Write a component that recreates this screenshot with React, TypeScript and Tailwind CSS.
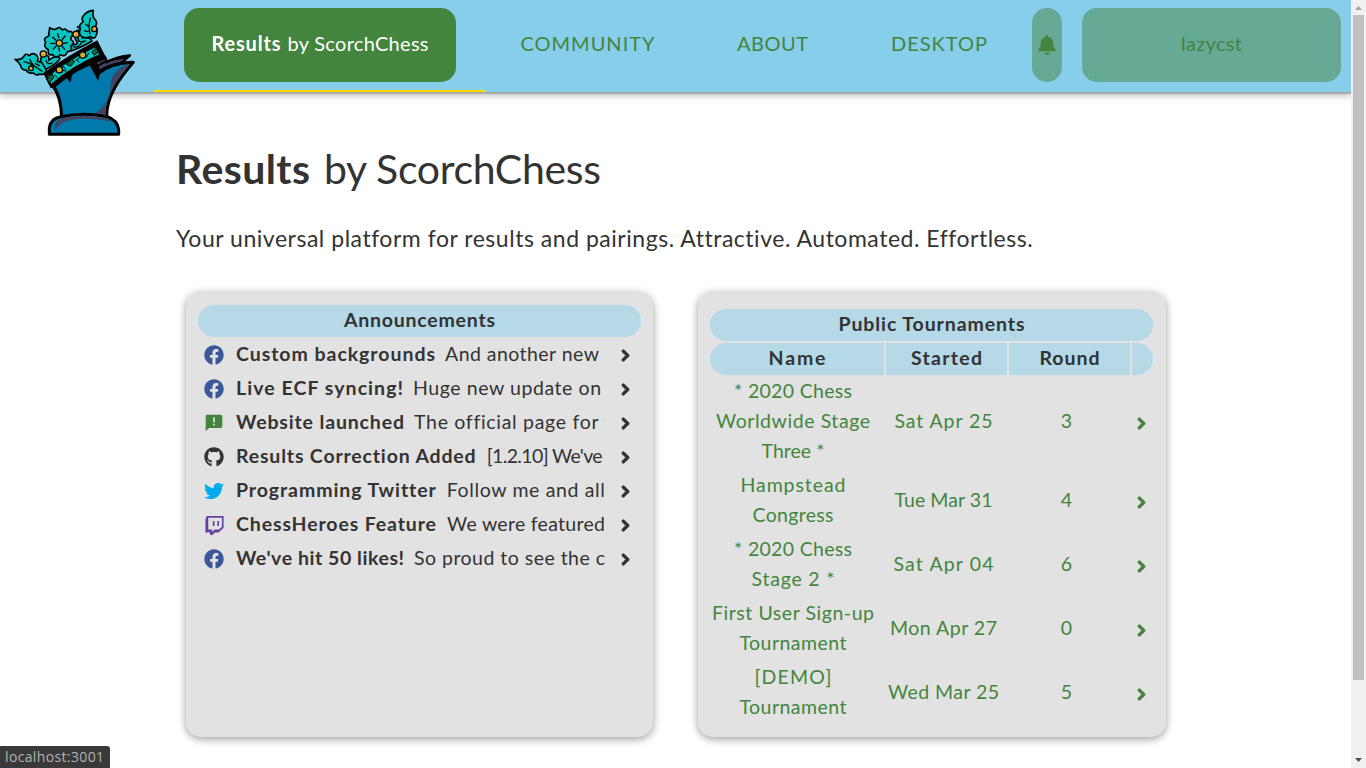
import React, { useLayoutEffect, useRef } from "react";
import { FaBell, FaChevronRight, FaFacebook, FaGithub, FaTwitter } from "react-icons/fa";
import { MdAnnouncement } from "react-icons/md";

/* One line of text tracked so that it spans `w` pixels. */
function Fit({ w, children, className = "" }: { w: number; children: string; className?: string }) {
  const ref = useRef<HTMLSpanElement>(null);
  useLayoutEffect(() => {
    const el = ref.current;
    if (!el) return;
    el.style.letterSpacing = "0px";
    el.style.marginRight = "0px";
    const natural = el.getBoundingClientRect().width;
    const gap = (w - natural) / Math.max(1, children.length - 1);
    el.style.letterSpacing = `${gap}px`;
    el.style.marginRight = `${-gap}px`;
  }, [w, children]);
  return (
    <span ref={ref} className={`inline-block shrink-0 whitespace-pre ${className}`}>
      {children}
    </span>
  );
}

function TwitchIcon() {
  return (
    <svg viewBox="0 0 24 24" className="size-[19px]" fill="#6441a5">
      <path d="M2.149 0L.537 4.119v16.836h5.731V24h3.224l3.045-3.045h4.657l6.269-6.269V0H2.149zm19.164 13.612l-3.582 3.582H12l-3.045 3.045v-3.045H4.119V2.149h17.194v11.463zm-3.582-7.343v6.262h-2.149V6.269h2.149zm-5.731 0v6.262H9.851V6.269H12z" />
    </svg>
  );
}

function Logo() {
  return (
    <svg viewBox="0 0 390 405" className="h-[135px] w-[130px]" strokeLinejoin="round" strokeLinecap="round">
      {/* rear mane */}
      <path d="M236 190L250 120L286 158L290 172Q320 154 360 151L330 178L270 215Z" fill="#444360" stroke="#000" strokeWidth="7" />
      {/* body */}
      <path
        d="M128 242C148 266 154 300 155 338L290 338C288 272 332 216 370 172C322 172 282 186 262 206C262 184 256 170 248 150L170 190Z"
        fill="#0079ac"
        stroke="#000"
        strokeWidth="9"
      />
      <path d="M361 177C325 184 298 216 302 248C296 290 276 315 248 328L287 334C284 272 326 218 361 177Z" fill="#444360" />
      <path d="M264 228C254 206 246 192 236 176C256 170 270 180 271 204Z" fill="#000" />
      <path d="M266 206C290 185 330 175 366 173" fill="none" stroke="#000" strokeWidth="7" />
      <path d="M250 196C272 168 310 162 345 158" fill="none" stroke="#000" strokeWidth="6" />
      <path d="M166 208L188 196Q184 212 181 230Q170 222 166 208Z" fill="#000" stroke="#000" strokeWidth="3" />
      {/* base */}
      <path d="M118 388V368Q122 340 152 335Q220 320 292 335Q322 345 326 374V388Z" fill="#0079ac" stroke="#000" strokeWidth="9" />
      <path d="M134 374Q132 344 160 339Q220 327 284 339Q300 343 309 351Q220 333 170 348Q146 354 138 374Z" fill="#444360" />
      {/* crown band */}
      <path d="M100 204Q176 150 262 106L290 162Q200 190 136 246L122 250Q112 232 100 204Z" fill="#000" />
      <path d="M113 216Q180 162 254 128L268 148Q190 180 124 236Z" fill="#00c5c0" />
      <path d="M112 222L126 206L132 217L118 233ZM170 177L184 163L194 169L183 183ZM246 140L259 129L266 141L253 150Z" fill="#0b6846" stroke="#000" strokeWidth="3" />
      <path d="M134 210L142 218M157 196L168 198M202 166L208 156M230 156L236 144M158 184L168 193M197 163L207 171" fill="none" stroke="#000" strokeWidth="3" />
      {/* scrolls between the leaves */}
      <path d="M96 178Q84 158 104 150Q120 150 116 166Q142 146 150 160Q146 174 102 196ZM184 138Q172 120 188 116Q200 122 202 112Q188 96 202 76Q220 80 216 98Q240 94 246 108Q224 122 184 138Z" fill="#00c5c0" stroke="#000" strokeWidth="5" />
      <path d="M108 166Q112 180 126 174M204 98Q204 116 226 108M190 124Q202 132 214 114" fill="none" stroke="#000" strokeWidth="4" />
      <path d="M204 66Q220 72 216 92" fill="none" stroke="#0b3654" strokeWidth="8" />
      {/* left leaf */}
      <path
        d="M15 163Q34 166 40 156Q47 142 58 152Q66 142 78 149Q87 158 82 169Q94 168 100 180Q108 190 108 200Q102 212 88 207Q80 214 70 204Q54 206 50 196Q34 196 32 182Q28 172 15 163Z"
        fill="#00c5c0"
        stroke="#000"
        strokeWidth="5"
      />
      <path d="M42 170Q66 176 96 199M60 164Q62 172 70 180M76 176L88 182" fill="none" stroke="#000" strokeWidth="4" />
      {/* right leaf */}
      <path
        d="M250 16Q232 18 222 30Q212 40 220 50Q204 60 211 72Q203 86 216 95Q230 102 240 94Q254 106 259 90Q265 76 256 64Q264 52 254 42Q246 34 250 16Z"
        fill="#00c5c0"
        stroke="#000"
        strokeWidth="5"
      />
      <path d="M241 40Q234 62 240 86M224 78L234 80M228 58L234 64" fill="none" stroke="#000" strokeWidth="4" />
      {/* flower */}
      <path
        d="M119 68Q132 76 138 72Q150 62 156 75Q168 68 174 80Q190 76 187 92Q180 100 183 104Q198 112 183 123Q188 140 172 140Q166 158 151 149Q138 164 128 149Q111 152 115 134Q98 125 107 112Q98 100 112 95Q120 91 116 86Q118 78 119 68Z"
        fill="#00c5c0"
        stroke="#000"
        strokeWidth="5"
      />
      <path d="M146 98L143 86M157 103L165 93M161 115L172 113M157 124L164 133M147 129L148 138M138 124L130 132M134 115L122 116M137 105L128 97" fill="none" stroke="#000" strokeWidth="4" />
      {/* jewels */}
      <g fill="#d9ab32" stroke="#000" strokeWidth="4">
        <circle cx="148" cy="114" r="9.500" />
        <circle cx="100" cy="147" r="9.500" />
        <circle cx="198" cy="88" r="9.500" />
        <circle cx="148" cy="194" r="9.500" />
        <circle cx="218" cy="150" r="9.500" />
        <circle cx="253" cy="72" r="8" />
        <circle cx="63" cy="190" r="7" />
      </g>
    </svg>
  );
}

const fb = <FaFacebook size={20} color="#3b5998" />;
type Item = { icon: React.ReactNode; title: string; tw: number; gap: string; body: string; bw: number };
const items: Item[] = [
  { icon: fb, title: "Custom backgrounds", tw: 199, gap: "pl-[10px]", body: "And another new", bw: 154 },
  { icon: fb, title: "Live ECF syncing!", tw: 167, gap: "pl-[10px]", body: "Huge new update on", bw: 188 },
  { icon: <MdAnnouncement size={20} color="#43853d" />, title: "Website launched", tw: 168, gap: "pl-[10px]", body: "The official page for the", bw: 219 },
  { icon: <FaGithub size={20} />, title: "Results Correction Added", tw: 240, gap: "pl-[11px]", body: "[1.2.10] We've", bw: 116 },
  { icon: <FaTwitter size={20} color="#00acee" />, title: "Programming Twitter", tw: 199, gap: "pl-[11px]", body: "Follow me and all", bw: 158 },
  { icon: <TwitchIcon />, title: "ChessHeroes Feature", tw: 200, gap: "pl-[11px]", body: "We were featured", bw: 158 },
  { icon: fb, title: "We've hit 50 likes!", tw: 168, gap: "pl-[10px]", body: "So proud to see the c", bw: 191 },
];

type Row = { name: [string, number][]; date: [string, number]; round: string };
const rows: Row[] = [
  { name: [["* 2020 Chess", 118], ["Worldwide Stage", 154], ["Three *", 63]], date: ["Sat Apr 25", 98], round: "3" },
  { name: [["Hampstead", 105], ["Congress", 81]], date: ["Tue Mar 31", 98], round: "4" },
  { name: [["* 2020 Chess", 118], ["Stage 2 *", 83]], date: ["Sat Apr 04", 100], round: "6" },
  { name: [["First User Sign-up", 162], ["Tournament", 107]], date: ["Mon Apr 27", 107], round: "0" },
  { name: [["[DEMO]", 77], ["Tournament", 107]], date: ["Wed Mar 25", 111], round: "5" },
];

const card = "h-[445px] rounded-[15px] bg-[#e2e2e2] px-3 shadow-[0_2px_8px_rgba(0,0,0,0.4)]";
const th = "flex h-8 items-center justify-center bg-[#b5d9e7] pb-[3px] font-bold";
const chevron = "shrink-0 stroke-[50]";

export default function App() {
  return (
    <div className="relative flex h-[768px] w-full overflow-hidden bg-white font-['Lato',sans-serif] text-[19.5px] text-[#333]">
      <div className="flex min-w-0 flex-1 flex-col">
        <header className="flex h-[94px] shrink-0 border-b-2 border-[#aaa] bg-[#87ceeb] pl-[154px] text-[20px] leading-6 text-[#43853d] shadow-[0_2px_6px_rgba(0,0,0,0.25)]">
          <div className="flex w-[332px] shrink-0 justify-center border-b-2 border-[#ffd700] pt-2">
            <div className="flex h-[74px] w-[272px] items-center justify-center gap-[7px] rounded-[15px] bg-[#43853d] pb-[5px] text-white">
              <Fit w={69} className="font-bold">Results</Fit>
              <Fit w={141}>by ScorchChess</Fit>
            </div>
          </div>
          <nav className="flex items-center pb-[7px]">
            <a className="flex w-[203px] justify-center"><Fit w={134}>COMMUNITY</Fit></a>
            <a className="flex w-[167px] justify-center"><Fit w={71}>ABOUT</Fit></a>
            <a className="flex w-[166px] justify-center"><Fit w={96}>DESKTOP</Fit></a>
          </nav>
          <div className="flex gap-5 pt-2 pl-[10px]">
            <div className="flex h-[74px] w-[30px] items-center justify-center rounded-[15px] bg-[#66a995]">
              <FaBell size={20} />
            </div>
            <div className="flex h-[74px] w-[259px] items-center justify-center rounded-[15px] bg-[#66a995] pb-[5px]">
              <Fit w={61}>lazycst</Fit>
            </div>
          </div>
        </header>

        <main className="flex flex-col pl-[176px]">
          <h1 className="mt-[51px] flex h-12 gap-[14px] text-[41px] leading-[48px]">
            <Fit w={134} className="font-bold">Results</Fit>
            <Fit w={277}>by ScorchChess</Fit>
          </h1>
          <p className="mt-[30px] h-[30px] text-[23px] leading-[30px]">
            <Fit w={855}>Your universal platform for results and pairings. Attractive. Automated. Effortless.</Fit>
          </p>
          <div className="mt-[39px] flex gap-[45px] pl-[10px]">
            <section className={`${card} w-[467px] pt-[13px]`}>
              <h2 className={`${th} mb-[2px] rounded-2xl`}><Fit w={151}>Announcements</Fit></h2>
              <ul className="flex flex-col gap-[2px]">
                {items.map((it) => (
                  <li key={it.title} className="flex h-8 items-center pl-[6px]">
                    <div className="flex w-5 shrink-0 justify-center">{it.icon}</div>
                    <div className="ml-[11px] flex w-[370px] shrink-0 overflow-hidden pb-[3px] pl-px leading-[27px]">
                      <Fit w={it.tw} className="font-bold">{it.title}</Fit>
                      <span className={`flex shrink-0 ${it.gap}`}><Fit w={it.bw}>{it.body}</Fit></span>
                    </div>
                    <FaChevronRight size={13} className={`${chevron} ml-[14px]`} />
                  </li>
                ))}
              </ul>
            </section>

            <section className={`${card} w-[468px] pt-[17px]`}>
              <div className="w-[443px]">
                <h2 className={`${th} rounded-2xl`}><Fit w={186}>Public Tournaments</Fit></h2>
                <div className="mt-[2px] mb-[2px] grid grid-cols-[174px_121px_121px_21px] gap-[2px]">
                  <div className={`${th} rounded-l-2xl`}><Fit w={57}>Name</Fit></div>
                  <div className={th}><Fit w={71}>Started</Fit></div>
                  <div className={th}><Fit w={60}>Round</Fit></div>
                  <div className={`${th} rounded-r-2xl`} />
                </div>
                <div className="flex flex-col gap-1 text-[#43853d]">
                  {rows.map((r) => (
                    <div key={r.date[0]} className="grid grid-cols-[174px_121px_121px_21px] items-center gap-x-[2px] leading-[27px]">
                      <div className="flex flex-col items-center pr-2">
                        {r.name.map(([t, w]) => (
                          <div key={t} className="flex h-[30px]"><Fit w={w}>{t}</Fit></div>
                        ))}
                      </div>
                      <div className="flex justify-center pr-[6px] pb-[3px]"><Fit w={r.date[1]}>{r.date[0]}</Fit></div>
                      <div className="flex justify-center pr-[6px] pb-[3px]">{r.round}</div>
                      <div className="flex justify-center pt-[2px] pr-[2px]"><FaChevronRight size={13} className={chevron} /></div>
                    </div>
                  ))}
                </div>
              </div>
            </section>
          </div>
        </main>
      </div>

      <div className="flex w-[15px] shrink-0 flex-col items-center bg-[#f1f1f1]">
        <svg viewBox="0 0 15 15" className="size-[15px] shrink-0"><path d="M4 10h7L7.500 6z" fill="#a3a3a3" /></svg>
        <div className="h-[665px] w-[11px] bg-[#c1c1c1]" />
        <svg viewBox="0 0 15 15" className="mt-auto size-[15px] shrink-0"><path d="M4 5h7L7.500 9z" fill="#505050" /></svg>
      </div>

      <div className="absolute top-[5px] left-[10px]"><Logo /></div>
      <div className="absolute bottom-0 left-0 flex h-[22px] w-[110px] items-center rounded-tr-[3px] bg-[#393939] pl-[5px] font-['Open_Sans',sans-serif] text-[14px] leading-[22px] text-[#b2b2b2]">
        <Fit w={99}>localhost:3001</Fit>
      </div>
    </div>
  );
}
